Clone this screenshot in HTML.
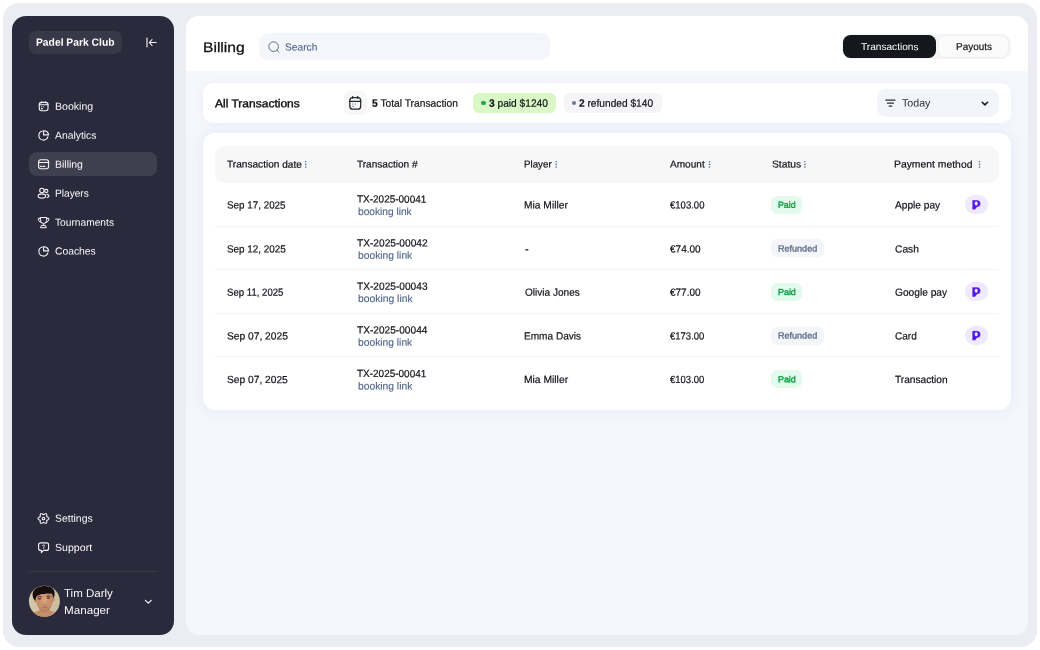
<!DOCTYPE html>
<html lang="en">
<head>
<meta charset="utf-8">
<title>Billing – Padel Park Club</title>
<style>
*{box-sizing:border-box;margin:0;padding:0}
html,body{width:1040px;height:650px;overflow:hidden;background:#fff}
body{font-family:"Liberation Sans",sans-serif;font-size:11px;color:#14161b;position:relative}
.b{position:absolute}
.t{position:absolute;white-space:nowrap;line-height:14px;height:14px;transform-origin:0 50%;font-family:"Liberation Sans",sans-serif}
.t b{font-weight:bold}
svg{position:absolute;left:0;top:0;overflow:visible;pointer-events:none}
.w{fill:none;stroke:#f4f4f7;stroke-width:1.1;stroke-linecap:round;stroke-linejoin:round}
.k{fill:none;stroke:#22252b;stroke-width:1;stroke-linecap:round;stroke-linejoin:round}
.dv{position:absolute;left:215px;width:784px;height:1px;background:#f1f2fa}
.paid{position:absolute;left:771px;width:31px;height:18px;border-radius:6px;background:#e3fbee}
.ref{position:absolute;left:771px;width:53px;height:18px;border-radius:6px;background:#f4f5f8}
.pp{position:absolute;left:965px;width:23px;height:19px;border-radius:9.5px;background:#eee9fe}
</style>
</head>
<body>
<!-- outer frame -->
<div class="b" style="left:3px;top:3px;width:1034px;height:644px;background:#ecedf2;border-radius:16px"></div>

<!-- ============ SIDEBAR ============ -->
<div class="b" style="left:12px;top:16px;width:162px;height:619px;background:#2b2a3c;border-radius:14px"></div>
<div class="b" style="left:29px;top:30.5px;width:93px;height:23px;border-radius:7px;background:#393848"></div>
<div class="b" style="left:29px;top:152.4px;width:128px;height:23.6px;border-radius:8px;background:#403f4f"></div>
<div class="b" style="left:29px;top:571px;width:128px;height:1px;background:#3c3b4c"></div>

<!-- avatar -->
<svg width="1040" height="650" viewBox="0 0 1040 650">
  <clipPath id="avc"><circle cx="44.4" cy="601.3" r="15.5"/></clipPath>
  <filter id="avb" x="-10%" y="-10%" width="120%" height="120%"><feGaussianBlur stdDeviation=".45"/></filter>
  <radialGradient id="avs" cx=".5" cy=".45" r=".6"><stop offset="0" stop-color="#d7a17b"/><stop offset=".7" stop-color="#c48c67"/><stop offset="1" stop-color="#a87453"/></radialGradient>
  <linearGradient id="avbg" x1="0" x2="1"><stop offset="0" stop-color="#d3c8aa"/><stop offset="1" stop-color="#cabd9c"/></linearGradient>
  <g clip-path="url(#avc)">
    <rect x="28" y="585" width="33" height="33" fill="url(#avbg)"/>
    <g filter="url(#avb)">
      <path d="M30 618C31 613 36 611.5 39.5 610.5L39.8 606H49.6L50 610.5C53.5 611.5 58 613 59 618Z" fill="#c68d67"/>
      <ellipse cx="35.4" cy="600.4" rx="1.1" ry="2" fill="#b98260"/>
      <ellipse cx="53.4" cy="599.6" rx="1.1" ry="2" fill="#b98260"/>
      <path d="M35.8 597C35.6 591 40 589.5 44.6 589.5C49.4 589.5 53.2 591.3 53.1 597C53 602 52.2 605.5 50 608.5C48.4 610.7 46.6 612 44.8 612C42.8 612 40.6 610.6 39 608.4C36.9 605.5 36 602 35.8 597Z" fill="url(#avs)"/>
      <path d="M32.8 596.5C31.6 590.5 36.5 586.2 44 586C51 585.8 55.4 589.3 54.6 594.5C54.4 596.2 54 597.6 53.4 598.6C53.3 596.2 52.6 594.4 51.4 593.2C49.5 594.2 47.5 593.2 45.6 593.8C43.5 594.5 42.2 593.4 40.3 594.6C38.4 595.8 37.6 595.2 36.5 596.6C35.8 597.6 35.6 599 35.4 600.6C34 599.8 33.1 598.2 32.8 596.5Z" fill="#15110f"/>
      <path d="M37.6 597.3C38.7 596.5 40.5 596.4 41.9 597M46.4 596.5C47.6 595.8 49.4 595.8 50.6 596.6" stroke="#2a1c17" stroke-width=".8" fill="none"/>
      <ellipse cx="39.6" cy="598.8" rx="1.5" ry=".75" fill="#3a2620"/>
      <ellipse cx="48.4" cy="598.1" rx="1.5" ry=".75" fill="#3a2620"/>
      <path d="M44.9 598.5L44.5 603.6" stroke="#e0ab86" stroke-width="1.1" fill="none"/>
      <path d="M43 604.3C44 604.9 45.4 604.9 46.4 604.3" stroke="#9c6a4d" stroke-width=".6" fill="none"/>
      <path d="M41.8 606C43.5 605.2 46.5 605.2 48 606" stroke="#b3957c" stroke-width=".9" fill="none" opacity=".55"/>
      <ellipse cx="45" cy="607.3" rx="2.5" ry=".95" fill="#b7686a"/>
    </g>
  </g>
</svg>

<!-- ============ MAIN ============ -->
<div class="b" style="left:186px;top:16px;width:842px;height:619px;background:#f6f7fc;border-radius:13px;overflow:hidden">
  <div class="b" style="left:0;top:0;width:842px;height:55px;background:#fff"></div>
</div>
<!-- search -->
<div class="b" style="left:259px;top:33.4px;width:291px;height:26.2px;border-radius:9px;background:#f4f6fb"></div>
<!-- tabs -->
<div class="b" style="left:841.5px;top:33.6px;width:169px;height:25.6px;border-radius:9px;background:#f5f5f7"></div>
<div class="b" style="left:938px;top:35px;width:71.4px;height:22.8px;border-radius:7.5px;background:#fbfbfb;border:1px solid #efeff1"></div>
<div class="b" style="left:843px;top:34.9px;width:93.2px;height:22.9px;border-radius:7.5px;background:#14171c"></div>

<!-- filter card -->
<div class="b" style="left:203.4px;top:82.8px;width:807.6px;height:40.5px;border-radius:10px;background:#fff;box-shadow:0 0 9px rgba(150,162,232,.10)"></div>
<div class="b" style="left:343.6px;top:91.4px;width:23.4px;height:23.4px;border-radius:6.5px;background:#f7f7f8"></div>
<div class="b" style="left:472.8px;top:93px;width:83.4px;height:20px;border-radius:6px;background:#d9f8c5"></div>
<div class="b" style="left:481.4px;top:101px;width:4.4px;height:4.4px;border-radius:50%;background:#21a651"></div>
<div class="b" style="left:563.6px;top:93px;width:98.6px;height:20px;border-radius:6px;background:#f5f5f7"></div>
<div class="b" style="left:572.1px;top:101px;width:4.2px;height:4.2px;border-radius:50%;background:#66779a"></div>
<div class="b" style="left:876.7px;top:89px;width:122px;height:28px;border-radius:9px;background:#f4f5fa"></div>

<!-- table card -->
<div class="b" style="left:203.4px;top:133.2px;width:807.8px;height:276.4px;border-radius:12px;background:#fff;box-shadow:0 0 16px rgba(150,162,232,.18)"></div>
<div class="b" style="left:214.6px;top:145.6px;width:784.6px;height:37.2px;border-radius:10px;background:#f7f7f8"></div>
<div class="dv" style="top:225.9px"></div>
<div class="dv" style="top:269.4px"></div>
<div class="dv" style="top:312.9px"></div>
<div class="dv" style="top:356.4px"></div>

<div class="paid" style="top:195.9px"></div>
<div class="ref"  style="top:239.2px"></div>
<div class="paid" style="top:282.8px"></div>
<div class="ref"  style="top:326.5px"></div>
<div class="paid" style="top:370.1px"></div>

<div class="pp" style="top:195.2px"></div>
<div class="pp" style="top:282.4px"></div>
<div class="pp" style="top:326px"></div>

<!-- ============ ICONS ============ -->
<svg width="1040" height="650" viewBox="0 0 1040 650">
  <!-- collapse -->
  <path class="w" style="stroke-width:1.3;stroke:#d9d9e0" d="M147 38.2V46.8"/>
  <path class="w" d="M156.2 42.5H149.6M152 39.6L149.3 42.5L152 45.4"/>
  <!-- booking -->
  <rect class="w" x="39.3" y="102.4" width="8.7" height="8.4" rx="2.2"/>
  <path class="w" d="M39.3 104.7H48M41.6 101.7V102.8M45.7 101.7V102.8"/>
  <path class="w" style="stroke-width:1.1" d="M41.5 106.8h.1M43.6 106.8h.1M41.5 108.6h1"/>
  <!-- analytics -->
  <path class="w" d="M42.4 131A4.6 4.6 0 1 0 47.9 136.7"/>
  <path class="w" d="M43.6 130.7V134.9H48.6A4.6 4.6 0 0 0 43.6 130.7Z"/>
  <!-- billing -->
  <rect class="w" x="38.6" y="159.8" width="10" height="8.9" rx="2.2"/>
  <path class="w" d="M38.6 162.5H48.6M40.6 166.4h1M43 166.4h1.7"/>
  <!-- players -->
  <circle class="w" cx="41.9" cy="190.5" r="2.2"/>
  <ellipse class="w" cx="41.9" cy="196" rx="3.7" ry="2.1"/>
  <circle class="w" cx="46.3" cy="191" r="1.6"/>
  <path class="w" d="M47 194.4C48.4 194.7 49 195.4 49 196C49 196.6 48.3 197.2 47.2 197.5"/>
  <!-- tournaments -->
  <path class="w" style="stroke-width:1" d="M40.5 217.5H46.7V220.4A3.1 3.1 0 0 1 40.5 220.4Z"/>
  <path class="w" style="stroke-width:1" d="M40.5 218.4H38.3C38.2 220.6 39.4 222.2 41.3 222.5M46.7 218.4H48.9C49 220.6 47.800 222.2 45.9 222.5"/>
  <path class="w" style="stroke-width:1" d="M43.6 223.6V225.3M40.9 227.7H46.3L45.4 225.4H41.8Z"/>
  <!-- coaches -->
  <path class="w" d="M42.4 247A4.6 4.6 0 1 0 47.9 252.7"/>
  <path class="w" d="M43.6 246.7V250.9H48.6A4.6 4.6 0 0 0 43.6 246.7Z"/>
  <!-- settings -->
  <path class="w" d="M49.0 518.5 48.8 519.0 48.5 519.4 48.0 519.7 47.5 520.0 47.1 520.2 46.8 520.4 46.7 520.8 46.8 521.2 46.8 521.8 46.7 522.4 46.6 522.9 46.2 523.2 45.8 523.3 45.2 523.2 44.7 523.0 44.2 522.7 43.8 522.4 43.5 522.4 43.2 522.4 42.8 522.7 42.3 523.0 41.8 523.2 41.2 523.3 40.8 523.2 40.4 522.9 40.3 522.4 40.2 521.8 40.2 521.2 40.3 520.8 40.2 520.4 39.9 520.2 39.5 520.0 39.0 519.7 38.5 519.4 38.2 519.0 38.0 518.5 38.2 518.0 38.5 517.6 39.0 517.3 39.5 517.0 39.9 516.8 40.2 516.6 40.3 516.2 40.2 515.8 40.2 515.2 40.3 514.6 40.4 514.1 40.8 513.8 41.2 513.7 41.8 513.8 42.3 514.0 42.8 514.3 43.2 514.6 43.5 514.6 43.8 514.6 44.2 514.3 44.7 514.0 45.2 513.8 45.8 513.7 46.2 513.8 46.6 514.1 46.7 514.6 46.8 515.2 46.8 515.8 46.7 516.2 46.8 516.6 47.1 516.8 47.5 517.0 48.0 517.3 48.5 517.6 48.8 518.0Z"/>
  <circle class="w" cx="43.5" cy="518.5" r="1.3"/>
  <!-- support -->
  <path class="w" d="M40.6 542.9H46.6A2 2 0 0 1 48.6 544.9V548.4A2 2 0 0 1 46.6 550.4H43.6L41.4 552.6V550.4H40.6A2 2 0 0 1 38.6 548.4V544.9A2 2 0 0 1 40.6 542.9Z"/>
  <path class="w" style="stroke-width:.9" d="M42.6 545.6C42.7 544.7 44.6 544.7 44.6 545.7C44.6 546.4 43.6 546.5 43.6 547.3M43.6 548.5v.1"/>
  <!-- user chevron -->
  <path class="w" style="stroke-width:1.2" d="M145.4 600.3L148.3 603.2L151.2 600.3"/>

  <!-- search -->
  <circle cx="273.6" cy="46.6" r="4.8" fill="none" stroke="#4d6184" stroke-width=".9"/>
  <path d="M277.2 50.3L278.7 52" fill="none" stroke="#4d6184" stroke-width=".9" stroke-linecap="round"/>

  <!-- calendar (filter) -->
  <rect class="k" style="stroke-width:1.25" x="349.8" y="97.5" width="10.9" height="11.7" rx="3"/>
  <path class="k" style="stroke-width:1.1" d="M349.8 101.4H360.7"/>
  <path class="k" style="stroke-width:1.5" d="M352.6 96.8V98M357.6 96.8V98"/>
  <path class="k" style="stroke-width:1.1;stroke:#6b6e75" d="M352.8 104h.2M355.3 104h.2M352.8 106.3h.9"/>
  <!-- filter lines -->
  <path class="k" style="stroke-width:1.2;stroke:#2c2f36" d="M885.8 100.2H895M887.4 103.2H893.4M889.2 106.1H891.8"/>
  <!-- dropdown chevron -->
  <path class="k" style="stroke-width:1.55;stroke:#15171c" d="M982.2 102.3L984.9 104.9L987.6 102.3"/>

  <!-- header column dots -->
  <g fill="#5274ab">
    <circle cx="305.7" cy="161.7" r=".8"/><circle cx="305.7" cy="164.4" r=".8"/><circle cx="305.7" cy="167.1" r=".8"/>
    <circle cx="556.2" cy="161.7" r=".8"/><circle cx="556.2" cy="164.4" r=".8"/><circle cx="556.2" cy="167.1" r=".8"/>
    <circle cx="709.5" cy="161.7" r=".8"/><circle cx="709.5" cy="164.4" r=".8"/><circle cx="709.5" cy="167.1" r=".8"/>
    <circle cx="804.9" cy="161.7" r=".8"/><circle cx="804.9" cy="164.4" r=".8"/><circle cx="804.9" cy="167.1" r=".8"/>
    <circle cx="979.5" cy="161.7" r=".8"/><circle cx="979.5" cy="164.4" r=".8"/><circle cx="979.5" cy="167.1" r=".8"/>
  </g>

  <!-- P logos -->
  <path transform="translate(972.1 199.9)" fill-rule="evenodd" fill="#5417ea" stroke="#fff" stroke-width=".5" d="M0 0H4.6C7.3 0 8.6 1.7 8.6 3.7C8.6 5.9 7 7.3 4.9 7.3L3.2 9.9H0ZM4.1 1.8C3.2 1.8 2.9 2.6 2.9 3.5C2.9 4.5 3.3 5.3 4.1 5.3C4.9 5.3 5.3 4.5 5.3 3.5C5.3 2.6 4.9 1.8 4.1 1.8Z"/>
  <path transform="translate(972.1 287.1)" fill-rule="evenodd" fill="#5417ea" stroke="#fff" stroke-width=".5" d="M0 0H4.6C7.3 0 8.6 1.7 8.6 3.7C8.6 5.9 7 7.3 4.9 7.3L3.2 9.9H0ZM4.1 1.8C3.2 1.8 2.9 2.6 2.9 3.5C2.9 4.5 3.3 5.3 4.1 5.3C4.9 5.3 5.3 4.5 5.3 3.5C5.3 2.6 4.9 1.8 4.1 1.8Z"/>
  <path transform="translate(972.1 330.7)" fill-rule="evenodd" fill="#5417ea" stroke="#fff" stroke-width=".5" d="M0 0H4.6C7.3 0 8.6 1.7 8.6 3.7C8.6 5.9 7 7.3 4.9 7.3L3.2 9.9H0ZM4.1 1.8C3.2 1.8 2.9 2.6 2.9 3.5C2.9 4.5 3.3 5.3 4.1 5.3C4.9 5.3 5.3 4.5 5.3 3.5C5.3 2.6 4.9 1.8 4.1 1.8Z"/>
</svg>

<!-- ============ TEXT ============ -->
<div id="txt" style="position:absolute;left:0;top:0;width:1040px;height:650px;will-change:transform">
<span class="t" style="left:35.8px;top:34px;font-size:10.5px;transform:translateY(0.80px) scaleX(0.9817) rotate(0.03deg);font-weight:bold;color:#fff">Padel Park Club</span>
<span class="t" style="left:54.8px;top:99px;font-size:10.25px;transform:translateY(0.70px) scaleX(1.0315) rotate(0.03deg);color:#f8f8fb">Booking</span>
<span class="t" style="left:54.9px;top:128px;font-size:10.25px;transform:translateY(0.70px) scaleX(1.0103) rotate(0.03deg);color:#f8f8fb">Analytics</span>
<span class="t" style="left:54.8px;top:157px;font-size:10.25px;transform:translateY(0.70px) scaleX(1.0209) rotate(0.03deg);color:#f8f8fb">Billing</span>
<span class="t" style="left:54.8px;top:186px;font-size:10.25px;transform:translateY(0.70px) scaleX(0.9890) rotate(0.03deg);color:#f8f8fb">Players</span>
<span class="t" style="left:54.5px;top:215px;font-size:10.25px;transform:translateY(0.80px) scaleX(0.9955) rotate(0.03deg);color:#f8f8fb">Tournaments</span>
<span class="t" style="left:55.3px;top:244px;font-size:10.25px;transform:translateY(0.60px) scaleX(1.0080) rotate(0.03deg);color:#f8f8fb">Coaches</span>
<span class="t" style="left:54.6px;top:511px;font-size:10.25px;transform:translateY(0.80px) scaleX(1.0166) rotate(0.03deg);color:#f8f8fb">Settings</span>
<span class="t" style="left:54.6px;top:540px;font-size:10.25px;transform:translateY(0.90px) scaleX(1.0338) rotate(0.03deg);color:#f8f8fb">Support</span>
<span class="t" style="left:63.6px;top:585px;font-size:11.4px;transform:translateY(0.90px) scaleX(1.0122) rotate(0.03deg);color:#f8f8fb">Tim Darly</span>
<span class="t" style="left:63.6px;top:603px;font-size:11.4px;transform:translateY(0.10px) scaleX(1.0228) rotate(0.03deg);color:#f8f8fb">Manager</span>
<span class="t" style="left:202.7px;top:41px;font-size:13.8px;transform:translateY(0.00px) scaleX(1.1328) rotate(0.03deg);color:#0d0e11;-webkit-text-stroke:0.25px #0d0e11">Billing</span>
<span class="t" style="left:285.1px;top:40px;font-size:10.2px;transform:translateY(0.50px) scaleX(1.0016) rotate(0.03deg);color:#4f638a;-webkit-text-stroke:0.1px #4f638a">Search</span>
<span class="t" style="left:860.7px;top:40px;font-size:10px;transform:translateY(0.10px) scaleX(1.0120) rotate(0.03deg);color:#fff">Transactions</span>
<span class="t" style="left:955.5px;top:40px;font-size:10px;transform:translateY(0.10px) scaleX(0.9961) rotate(0.03deg);color:#111318;-webkit-text-stroke:0.2px #111318">Payouts</span>
<span class="t" style="left:214.8px;top:96px;font-size:11.4px;transform:translateY(0.20px) scaleX(1.0546) rotate(0.03deg);color:#0b0c0f;-webkit-text-stroke:0.38px #0b0c0f">All Transactions</span>
<span class="t" style="left:372.3px;top:95px;font-size:10.6px;transform:translateY(0.80px) scaleX(0.9684) rotate(0.03deg);color:#111318;-webkit-text-stroke:0.2px #111318"><b>5</b> Total Transaction</span>
<span class="t" style="left:488.8px;top:95px;font-size:10.6px;transform:translateY(0.80px) scaleX(0.9609) rotate(0.03deg);color:#111318;-webkit-text-stroke:0.2px #111318"><b>3</b> paid $1240</span>
<span class="t" style="left:579.3px;top:95px;font-size:10.6px;transform:translateY(0.80px) scaleX(0.9594) rotate(0.03deg);color:#111318;-webkit-text-stroke:0.2px #111318"><b>2</b> refunded $140</span>
<span class="t" style="left:901.9px;top:95px;font-size:10.6px;transform:translateY(0.60px) scaleX(1.0065) rotate(0.03deg);color:#2b2e35">Today</span>
<span class="t" style="left:226.6px;top:157px;font-size:10px;transform:translateY(0.60px) scaleX(1.0109) rotate(0.03deg);color:#111318;-webkit-text-stroke:0.2px #111318">Transaction date</span>
<span class="t" style="left:357.0px;top:157px;font-size:10px;transform:translateY(0.60px) scaleX(1.0058) rotate(0.03deg);color:#111318;-webkit-text-stroke:0.2px #111318">Transaction #</span>
<span class="t" style="left:524.4px;top:157px;font-size:10px;transform:translateY(0.60px) scaleX(0.9750) rotate(0.03deg);color:#111318;-webkit-text-stroke:0.2px #111318">Player</span>
<span class="t" style="left:669.8px;top:157px;font-size:10px;transform:translateY(0.60px) scaleX(1.0067) rotate(0.03deg);color:#111318;-webkit-text-stroke:0.2px #111318">Amount</span>
<span class="t" style="left:771.9px;top:157px;font-size:10px;transform:translateY(0.60px) scaleX(1.0299) rotate(0.03deg);color:#111318;-webkit-text-stroke:0.2px #111318">Status</span>
<span class="t" style="left:894.4px;top:157px;font-size:10px;transform:translateY(0.60px) scaleX(1.0374) rotate(0.03deg);color:#111318;-webkit-text-stroke:0.2px #111318">Payment method</span>
<span class="t" style="left:227.0px;top:198px;font-size:10.4px;transform:translateY(0.60px) scaleX(0.9475) rotate(0.03deg);color:#111318;-webkit-text-stroke:0.2px #111318">Sep 17, 2025</span>
<span class="t" style="left:357.4px;top:192px;font-size:10.4px;transform:translateY(0.60px) scaleX(0.9594) rotate(0.03deg);color:#111318;-webkit-text-stroke:0.2px #111318">TX-2025-00041</span>
<span class="t" style="left:357.6px;top:204px;font-size:10.4px;transform:translateY(0.90px) scaleX(0.9783) rotate(0.03deg);color:#4e6388;-webkit-text-stroke:0.12px #4e6388">booking link</span>
<span class="t" style="left:523.9px;top:198px;font-size:10.4px;transform:translateY(0.60px) scaleX(0.9867) rotate(0.03deg);color:#111318;-webkit-text-stroke:0.2px #111318">Mia Miller</span>
<span class="t" style="left:669.5px;top:198px;font-size:10.4px;transform:translateY(0.60px) scaleX(0.9171) rotate(0.03deg);color:#111318;-webkit-text-stroke:0.2px #111318">€103.00</span>
<span class="t" style="left:894.8px;top:198px;font-size:10.4px;transform:translateY(0.60px) scaleX(0.9769) rotate(0.03deg);color:#111318;-webkit-text-stroke:0.2px #111318">Apple pay</span>
<span class="t" style="left:777.5px;top:197px;font-size:8.7px;transform:translateY(0.70px) scaleX(1.0120) rotate(0.03deg);color:#17a34d;-webkit-text-stroke:0.45px #17a34d">Paid</span>
<span class="t" style="left:226.7px;top:242px;font-size:10.4px;transform:translateY(0.50px) scaleX(0.9516) rotate(0.03deg);color:#111318;-webkit-text-stroke:0.2px #111318">Sep 12, 2025</span>
<span class="t" style="left:357.4px;top:236px;font-size:10.4px;transform:translateY(0.50px) scaleX(0.9781) rotate(0.03deg);color:#111318;-webkit-text-stroke:0.2px #111318">TX-2025-00042</span>
<span class="t" style="left:357.5px;top:248px;font-size:10.4px;transform:translateY(0.80px) scaleX(0.9881) rotate(0.03deg);color:#4e6388;-webkit-text-stroke:0.12px #4e6388">booking link</span>
<span class="t" style="left:524.7px;top:242px;font-size:10.4px;transform:translateY(0.50px) scaleX(1.0660) rotate(0.03deg);color:#111318;-webkit-text-stroke:0.2px #111318">-</span>
<span class="t" style="left:669.9px;top:242px;font-size:10.4px;transform:translateY(0.50px) scaleX(0.9628) rotate(0.03deg);color:#111318;-webkit-text-stroke:0.2px #111318">€74.00</span>
<span class="t" style="left:894.8px;top:242px;font-size:10.4px;transform:translateY(0.50px) scaleX(0.9839) rotate(0.03deg);color:#111318;-webkit-text-stroke:0.2px #111318">Cash</span>
<span class="t" style="left:777.5px;top:241px;font-size:8.9px;transform:translateY(0.50px) scaleX(1.0182) rotate(0.03deg);color:#5b6a8b;-webkit-text-stroke:0.3px #5b6a8b">Refunded</span>
<span class="t" style="left:226.5px;top:285px;font-size:10.4px;transform:translateY(0.80px) scaleX(0.9241) rotate(0.03deg);color:#111318;-webkit-text-stroke:0.2px #111318">Sep 11, 2025</span>
<span class="t" style="left:357.0px;top:279px;font-size:10.4px;transform:translateY(0.80px) scaleX(0.9767) rotate(0.03deg);color:#111318;-webkit-text-stroke:0.2px #111318">TX-2025-00043</span>
<span class="t" style="left:357.8px;top:292px;font-size:10.4px;transform:translateY(0.10px) scaleX(0.9954) rotate(0.03deg);color:#4e6388;-webkit-text-stroke:0.12px #4e6388">booking link</span>
<span class="t" style="left:524.6px;top:285px;font-size:10.4px;transform:translateY(0.80px) scaleX(0.9689) rotate(0.03deg);color:#111318;-webkit-text-stroke:0.2px #111318">Olivia Jones</span>
<span class="t" style="left:669.9px;top:285px;font-size:10.4px;transform:translateY(0.80px) scaleX(0.9625) rotate(0.03deg);color:#111318;-webkit-text-stroke:0.2px #111318">€77.00</span>
<span class="t" style="left:894.5px;top:285px;font-size:10.4px;transform:translateY(0.80px) scaleX(0.9801) rotate(0.03deg);color:#111318;-webkit-text-stroke:0.2px #111318">Google pay</span>
<span class="t" style="left:778.0px;top:284px;font-size:8.7px;transform:translateY(0.90px) scaleX(1.0248) rotate(0.03deg);color:#17a34d;-webkit-text-stroke:0.45px #17a34d">Paid</span>
<span class="t" style="left:226.9px;top:329px;font-size:10.4px;transform:translateY(0.50px) scaleX(0.9850) rotate(0.03deg);color:#111318;-webkit-text-stroke:0.2px #111318">Sep 07, 2025</span>
<span class="t" style="left:357.4px;top:323px;font-size:10.4px;transform:translateY(0.50px) scaleX(0.9749) rotate(0.03deg);color:#111318;-webkit-text-stroke:0.2px #111318">TX-2025-00044</span>
<span class="t" style="left:357.5px;top:335px;font-size:10.4px;transform:translateY(0.80px) scaleX(0.9881) rotate(0.03deg);color:#4e6388;-webkit-text-stroke:0.12px #4e6388">booking link</span>
<span class="t" style="left:523.9px;top:329px;font-size:10.4px;transform:translateY(0.50px) scaleX(0.9688) rotate(0.03deg);color:#111318;-webkit-text-stroke:0.2px #111318">Emma Davis</span>
<span class="t" style="left:669.9px;top:329px;font-size:10.4px;transform:translateY(0.50px) scaleX(0.9148) rotate(0.03deg);color:#111318;-webkit-text-stroke:0.2px #111318">€173.00</span>
<span class="t" style="left:894.7px;top:329px;font-size:10.4px;transform:translateY(0.50px) scaleX(0.9689) rotate(0.03deg);color:#111318;-webkit-text-stroke:0.2px #111318">Card</span>
<span class="t" style="left:777.5px;top:328px;font-size:8.9px;transform:translateY(0.50px) scaleX(1.0182) rotate(0.03deg);color:#5b6a8b;-webkit-text-stroke:0.3px #5b6a8b">Refunded</span>
<span class="t" style="left:226.7px;top:373px;font-size:10.4px;transform:translateY(0.10px) scaleX(0.9836) rotate(0.03deg);color:#111318;-webkit-text-stroke:0.2px #111318">Sep 07, 2025</span>
<span class="t" style="left:357.1px;top:367px;font-size:10.4px;transform:translateY(0.10px) scaleX(0.9599) rotate(0.03deg);color:#111318;-webkit-text-stroke:0.2px #111318">TX-2025-00041</span>
<span class="t" style="left:357.5px;top:379px;font-size:10.4px;transform:translateY(0.40px) scaleX(0.9896) rotate(0.03deg);color:#4e6388;-webkit-text-stroke:0.12px #4e6388">booking link</span>
<span class="t" style="left:524.4px;top:373px;font-size:10.4px;transform:translateY(0.10px) scaleX(0.9913) rotate(0.03deg);color:#111318;-webkit-text-stroke:0.2px #111318">Mia Miller</span>
<span class="t" style="left:669.9px;top:373px;font-size:10.4px;transform:translateY(0.10px) scaleX(0.9148) rotate(0.03deg);color:#111318;-webkit-text-stroke:0.2px #111318">€103.00</span>
<span class="t" style="left:895.2px;top:373px;font-size:10.4px;transform:translateY(0.10px) scaleX(0.9766) rotate(0.03deg);color:#111318;-webkit-text-stroke:0.2px #111318">Transaction</span>
<span class="t" style="left:777.6px;top:372px;font-size:8.7px;transform:translateY(0.20px) scaleX(1.0234) rotate(0.03deg);color:#17a34d;-webkit-text-stroke:0.45px #17a34d">Paid</span>
</div>
</body>
</html>
